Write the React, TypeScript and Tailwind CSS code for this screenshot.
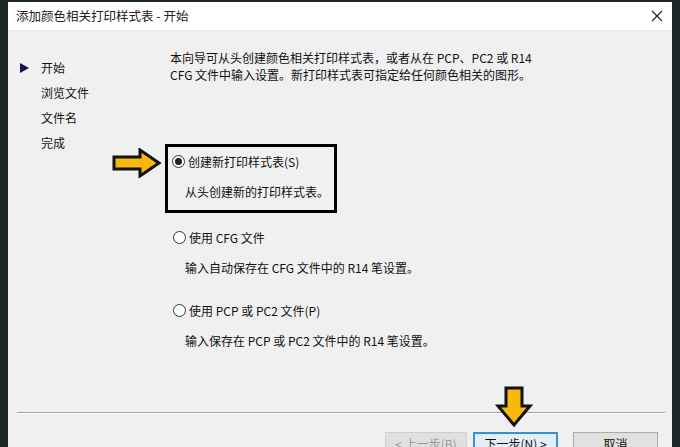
const font = { fontFamily: '"Microsoft YaHei", "Noto Sans CJK SC", "Noto Sans", sans-serif' };

function Radio({ checked }: { checked?: boolean }) {
  return (
    <span className="w-[13px] h-[13px] rounded-full border border-[#333] bg-white flex items-center justify-center shrink-0">
      {checked && <span className="w-[7px] h-[7px] rounded-full bg-[#222]" />}
    </span>
  );
}

function ArrowRight() {
  return (
    <svg width="50" height="30" viewBox="0 0 50 30" className="absolute left-[112px] top-[148px]">
      <path d="M2 9 H28 V2 L47 15 L28 28 V21 H2 Z" fill="#f7b90c" stroke="#111" strokeWidth="3" strokeLinejoin="miter" />
    </svg>
  );
}

function ArrowDown() {
  return (
    <svg width="38" height="42" viewBox="0 0 38 42" className="absolute left-[495px] top-[386px]">
      <path d="M11 2 H27 V20 H35 L19 39 L3 20 H11 Z" fill="#f7b90c" stroke="#111" strokeWidth="3" />
    </svg>
  );
}

const navItems = ['开始', '浏览文件', '文件名', '完成'];

export default function App() {
  return (
    <div className="w-[680px] h-[447px] overflow-hidden relative flex bg-[#1c2828] text-[12px] text-[#111]" style={font}>
      <div className="w-[8px] shrink-0" />
      <div className="flex-1 flex flex-col mt-[2px] bg-[#f0f0f0] overflow-hidden">
        <div className="h-[29px] shrink-0 bg-white border-b border-[#e6e6e6] flex items-center justify-between pl-[8px] pr-[9px]">
          <span className="text-[12.5px] text-[#222]">添加颜色相关打印样式表 - 开始</span>
          <svg width="12" height="12" viewBox="0 0 12 12">
            <path d="M1 1 L11 11 M11 1 L1 11" stroke="#222" strokeWidth="1.2" />
          </svg>
        </div>

        <div className="h-[381px] shrink-0 flex">
          <div className="w-[157px] shrink-0 pt-[28px] pl-[12px]">
            {navItems.map((item, i) => (
              <div key={item} className="h-[25px] flex items-start">
                <span className="w-[21px] h-[17px] flex items-center">
                  {i === 0 && (
                    <svg width="9" height="10" viewBox="0 0 9 10">
                      <path d="M0 0 L9 5 L0 10 Z" fill="#14145a" />
                    </svg>
                  )}
                </span>
                <span className="leading-[17px]">{item}</span>
              </div>
            ))}
          </div>

          <div className="flex-1 pt-[18px]">
            <p className="leading-[17px] pl-[5px] w-[380px]">
              本向导可从头创建颜色相关打印样式表，或者从在 PCP、PC2 或 R14 CFG 文件中输入设置。新打印样式表可指定给任何颜色相关的图形。
            </p>

            <div className="mt-[61px] w-[172px] border-[3px] border-black pl-[4px] pt-[6px] pb-[10px]">
              <div className="flex items-center gap-[3px] h-[17px]">
                <Radio checked />
                <span>创建新打印样式表(S)</span>
              </div>
              <div className="mt-[13px] pl-[13px] leading-[17px]">从头创建新的打印样式表。</div>
            </div>

            <div className="mt-[16px] pl-[8px]">
              <div className="flex items-center gap-[3px] h-[17px]">
                <Radio />
                <span>使用 CFG 文件</span>
              </div>
              <div className="mt-[13px] pl-[12px] leading-[17px]">输入自动保存在 CFG 文件中的 R14 笔设置。</div>
            </div>

            <div className="mt-[26px] pl-[8px]">
              <div className="flex items-center gap-[3px] h-[17px]">
                <Radio />
                <span>使用 PCP 或 PC2 文件(P)</span>
              </div>
              <div className="mt-[13px] pl-[12px] leading-[17px]">输入保存在 PCP 或 PC2 文件中的 R14 笔设置。</div>
            </div>
          </div>
        </div>

        <div className="shrink-0 ml-[9px] mr-[7px] border-t border-[#a0a0a0] border-b border-b-white" />

        <div className="shrink-0 flex justify-end gap-[6px] pr-[14px] pt-[18px]">
          <button className="w-[82px] h-[23px] border border-[#cfcfcf] bg-[#e0e0e0] text-[#9a9a9a]">&lt; 上一步(B)</button>
          <button className="w-[85px] h-[23px] border-2 border-[#3a8fd6] bg-[#e4eef8] text-[#111]">下一步(N) &gt;</button>
          <button className="w-[85px] h-[23px] border border-[#adadad] bg-[#e1e1e1] text-[#111] ml-[9px]">取消</button>
        </div>
      </div>
      <div className="w-[8px] shrink-0" />

      <ArrowRight />
      <ArrowDown />
    </div>
  );
}
